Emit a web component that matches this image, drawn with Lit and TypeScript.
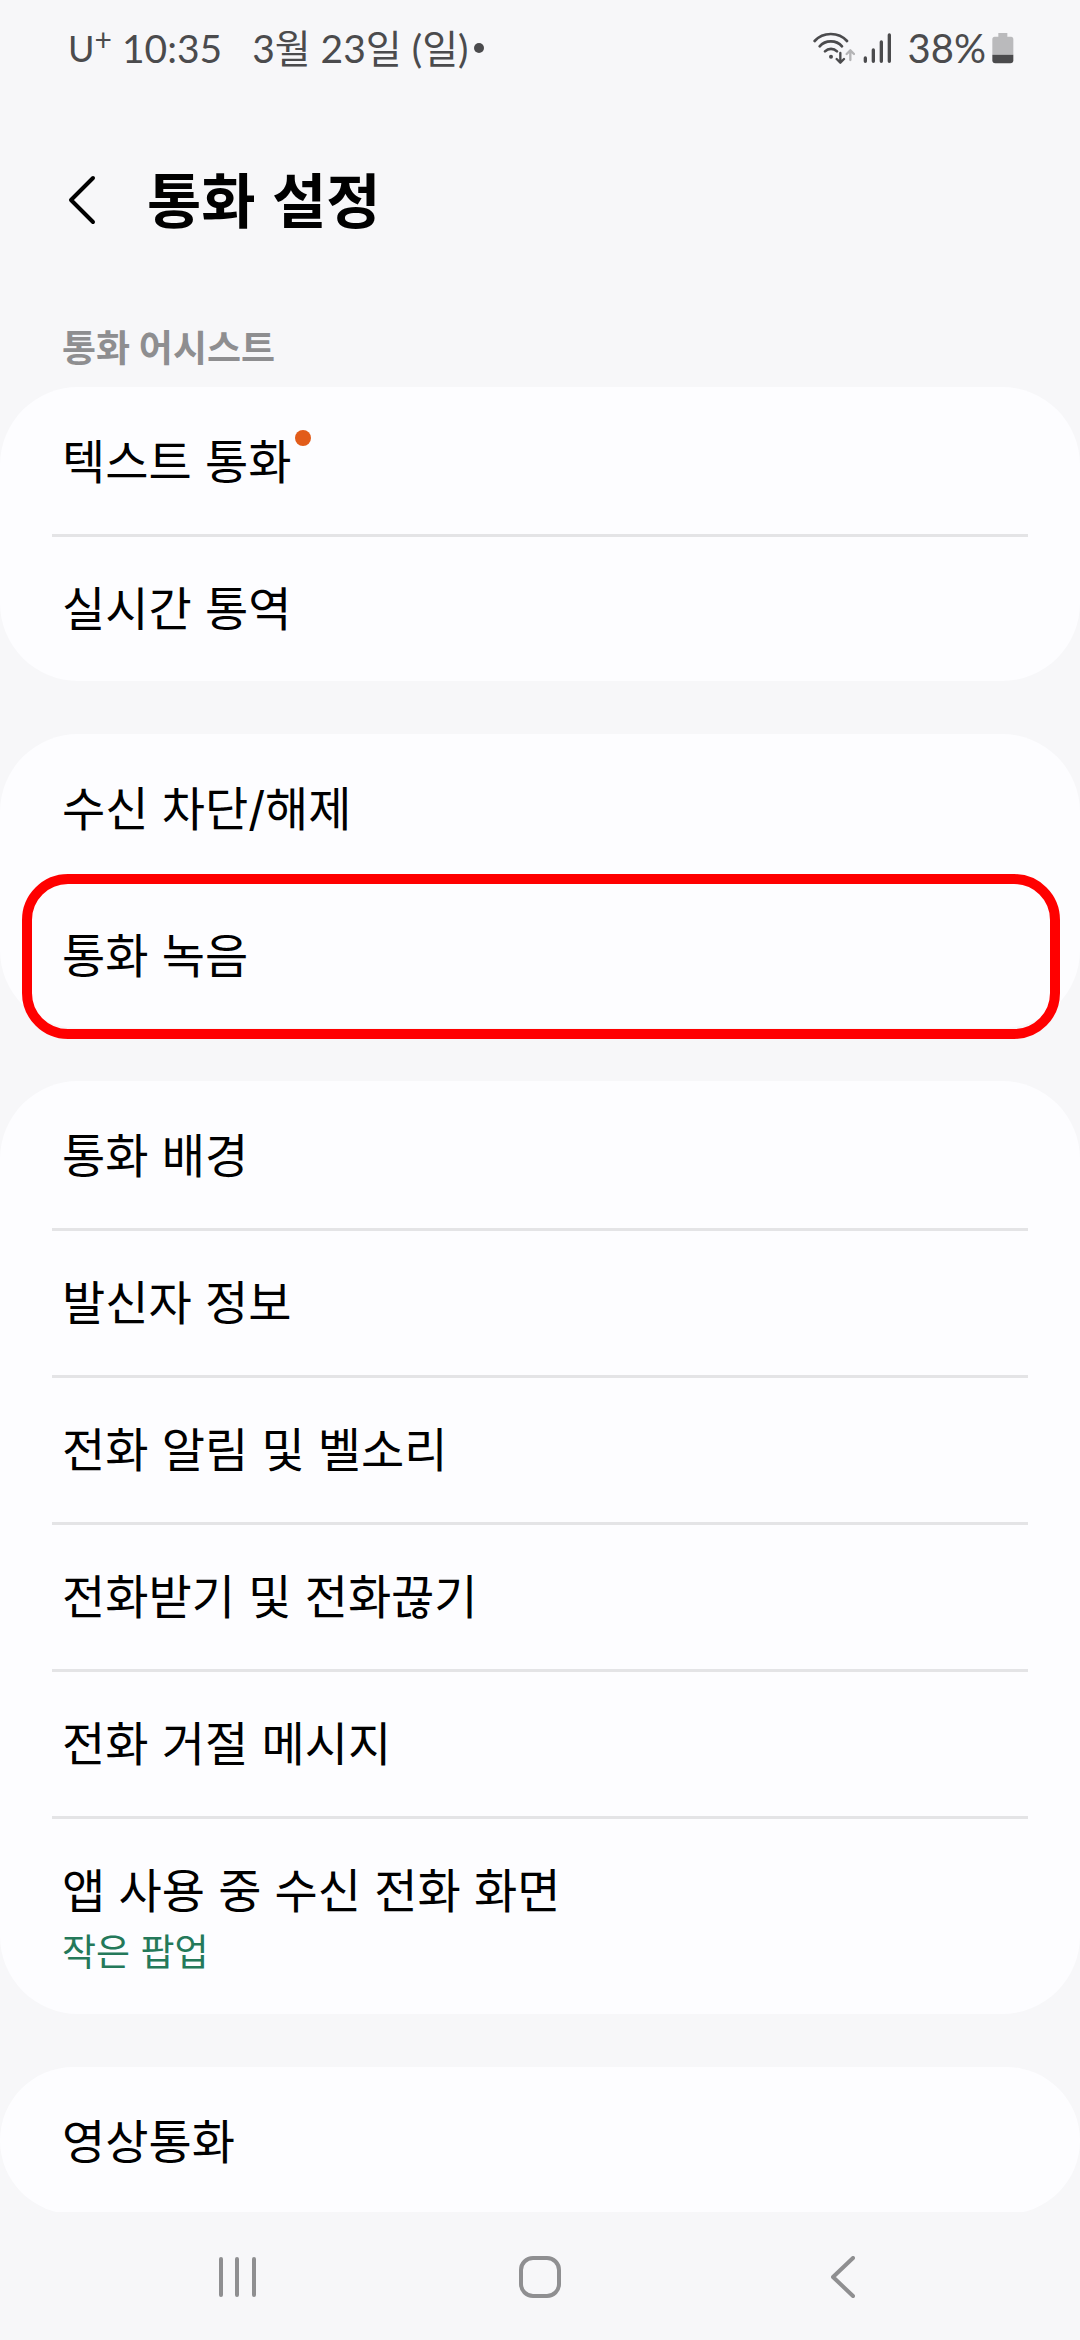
import { LitElement, html, css, svg, nothing } from "lit";
import { customElement, property } from "lit/decorators.js";

interface Setting {
  title: string;
  summary?: string;
  isNew?: boolean;
  highlighted?: boolean;
}

interface Group {
  heading?: string;
  items: Setting[];
}

const GROUPS: Group[] = [
  {
    heading: "통화 어시스트",
    items: [{ title: "텍스트 통화", isNew: true }, { title: "실시간 통역" }],
  },
  {
    items: [{ title: "수신 차단/해제" }, { title: "통화 녹음", highlighted: true }],
  },
  {
    items: [
      { title: "통화 배경" },
      { title: "발신자 정보" },
      { title: "전화 알림 및 벨소리" },
      { title: "전화받기 및 전화끊기" },
      { title: "전화 거절 메시지" },
      { title: "앱 사용 중 수신 전화 화면", summary: "작은 팝업" },
    ],
  },
  { items: [{ title: "영상통화" }] },
];

@customElement("status-bar")
export class StatusBar extends LitElement {
  static styles = css`
    :host {
      display: flex;
      align-items: center;
      justify-content: space-between;
      height: 96px;
      padding: 0 66px 0 68px;
      color: #4b4b4d;
      font: 400 39px/48px Lato, "Noto Sans CJK KR", sans-serif;
    }
    .side {
      display: flex;
      align-items: center;
    }
    .carrier {
      display: flex;
      margin-right: 10px;
      font-size: 36px;
    }
    .plus {
      font-size: 30px;
      line-height: 30px;
    }
    .clock {
      margin-right: 30px;
    }
    .bullet {
      width: 10px;
      height: 10px;
      margin-left: 6px;
      border-radius: 50%;
      background: currentColor;
    }
    .signal {
      margin: 0 16px 0 8px;
    }
    .level {
      font-size: 40px;
    }
    .battery {
      margin-left: 6px;
    }
    svg {
      display: block;
      fill: none;
      stroke: currentColor;
      stroke-linecap: round;
      stroke-linejoin: round;
    }
  `;

  render() {
    return html`
      <div class="side">
        <span class="carrier">U<span class="plus">+</span></span>
        <time class="clock">10:35</time>
        <span>3월 23일 (일)</span>
        <span class="bullet"></span>
      </div>
      <div class="side">
        <svg width="42" height="32" viewBox="84 94 126 96" stroke-width="8" aria-hidden="true">
          <path d="M89 121C114 93 161 93 186 121" />
          <path d="M104 137C121 117 154 117 171 137" />
          <path d="M120 152C130 142 146 142 156 152" />
          <circle cx="138" cy="168" r="6" fill="currentColor" stroke="none" />
          <path d="M166 157V184M155 175L166 186L177 175" stroke-width="7" />
          <path d="M196 178V150M185 160L196 149L207 160" stroke="#b4b4b6" stroke-width="7" />
        </svg>
        <svg class="signal" width="29" height="32" viewBox="236 94 87 96" stroke-width="10" aria-hidden="true">
          <path d="M243 172V182M267 148V182M291 124V182M315 103V182" />
        </svg>
        <span class="level">38%</span>
        <svg class="battery" width="22" height="32" viewBox="632 94 66 96" aria-hidden="true">
          <path
            d="M651 97h27v11h11q7 0 7 8v46h-63v-46q0-8 7-8h11z"
            fill="#bababc"
            stroke="none"
          />
          <path d="M633 162h63v17q0 9-9 9h-45q-9 0-9-9z" fill="currentColor" stroke="none" />
        </svg>
      </div>
    `;
  }
}

@customElement("setting-card")
export class SettingCard extends LitElement {
  @property({ attribute: false }) items: Setting[] = [];

  static styles = css`
    :host {
      display: block;
      border-radius: 78px;
      background: #fdfdff;
    }
    .list {
      margin: 0;
      padding: 0 52px;
      list-style: none;
    }
    .item {
      position: relative;
    }
    .item + .item {
      border-top: 3px solid #e4e4e6;
    }
    .row {
      display: flex;
      flex-direction: column;
      justify-content: flex-start;
      align-items: flex-start;
      gap: 6px;
      box-sizing: border-box;
      width: 100%;
      min-height: 144px;
      padding: 42px 10px 36px;
      border: 0;
      background: none;
      color: #000;
      text-align: left;
      font: 400 47px/60px Inter, "Noto Sans CJK KR", sans-serif;
    }
    .item:first-child .row {
      min-height: 147px;
      padding-top: 45px;
    }
    .title {
      position: relative;
    }
    .dot {
      position: absolute;
      top: -2px;
      left: 100%;
      width: 16px;
      height: 16px;
      margin-left: 4px;
      border-radius: 50%;
      background: #e25c1a;
    }
    .summary {
      color: #24795a;
      font-size: 37px;
      line-height: 51px;
    }
    .highlight {
      position: absolute;
      inset: -10px -32px -11px -30px;
      border: 10px solid #f00;
      border-radius: 46px;
      pointer-events: none;
    }
  `;

  render() {
    return html`
      <ul class="list">
        ${this.items.map(
          (item) => html`
            <li class="item">
              <button class="row" type="button">
                <span class="title"
                  >${item.title}${item.isNew ? html`<span class="dot"></span>` : nothing}</span
                >
                ${item.summary ? html`<span class="summary">${item.summary}</span>` : nothing}
              </button>
              ${item.highlighted ? html`<span class="highlight"></span>` : nothing}
            </li>
          `
        )}
      </ul>
    `;
  }
}

const recentsIcon = svg`<path d="M3 3V39M19 3V39M36 3V39" />`;
const homeIcon = svg`<rect x="2" y="2" width="38" height="38" rx="12" />`;
const backIcon = svg`<path d="M22 2L2 21L22 40" />`;

@customElement("nav-bar")
export class NavBar extends LitElement {
  static styles = css`
    :host {
      display: grid;
      grid-template-columns: repeat(3, 1fr);
      box-sizing: border-box;
      height: 128px;
      padding: 2px 86px 0;
      color: #8f8f91;
    }
    .key {
      display: flex;
      align-items: center;
      justify-content: center;
      padding: 0;
      border: 0;
      background: none;
      color: inherit;
    }
    svg {
      fill: none;
      stroke: currentColor;
      stroke-width: 4;
      stroke-linecap: round;
      stroke-linejoin: round;
    }
  `;

  render() {
    return html`
      <button class="key" type="button" aria-label="최근 앱">
        <svg width="39" height="42" viewBox="0 0 39 42">${recentsIcon}</svg>
      </button>
      <button class="key" type="button" aria-label="홈">
        <svg width="42" height="42" viewBox="0 0 42 42">${homeIcon}</svg>
      </button>
      <button class="key" type="button" aria-label="뒤로">
        <svg width="24" height="42" viewBox="0 0 24 42">${backIcon}</svg>
      </button>
    `;
  }
}

@customElement("app-root")
export class AppRoot extends LitElement {
  static styles = css`
    :host {
      display: flex;
      flex-direction: column;
      height: 100vh;
      background: #f7f7f9;
      font-family: Inter, "Noto Sans CJK KR", sans-serif;
    }
    .header {
      display: flex;
      align-items: center;
      gap: 50px;
      padding: 56px 68px 0;
    }
    .back {
      display: flex;
      padding: 0;
      border: 0;
      background: none;
    }
    .heading {
      margin: 0;
      padding-top: 6px;
      font: 700 59px/90px "Liberation Sans", "Noto Sans CJK KR", sans-serif;
    }
    .content {
      flex: 1;
      min-height: 0;
      overflow: hidden;
      display: flex;
      flex-direction: column;
      gap: 53px;
      padding-top: 75px;
    }
    .group {
      flex: none;
    }
    .label {
      margin: 0 0 12px;
      padding: 0 62px;
      color: #8e8e90;
      font-size: 37px;
      font-weight: 700;
      line-height: 52px;
    }
    status-bar,
    nav-bar {
      flex: none;
    }
  `;

  render() {
    return html`
      <status-bar></status-bar>
      <header class="header">
        <button class="back" type="button" aria-label="뒤로">
          <svg width="29" height="50" viewBox="0 0 29 50" fill="none" stroke="#000" stroke-width="4" stroke-linecap="round" stroke-linejoin="round">
            <path d="M25 3L3 25L25 47" />
          </svg>
        </button>
        <h1 class="heading">통화 설정</h1>
      </header>
      <main class="content">
        ${GROUPS.map(
          (group) => html`
            <section class="group">
              ${group.heading ? html`<h2 class="label">${group.heading}</h2>` : nothing}
              <setting-card .items=${group.items}></setting-card>
            </section>
          `
        )}
      </main>
      <nav-bar></nav-bar>
    `;
  }
}
